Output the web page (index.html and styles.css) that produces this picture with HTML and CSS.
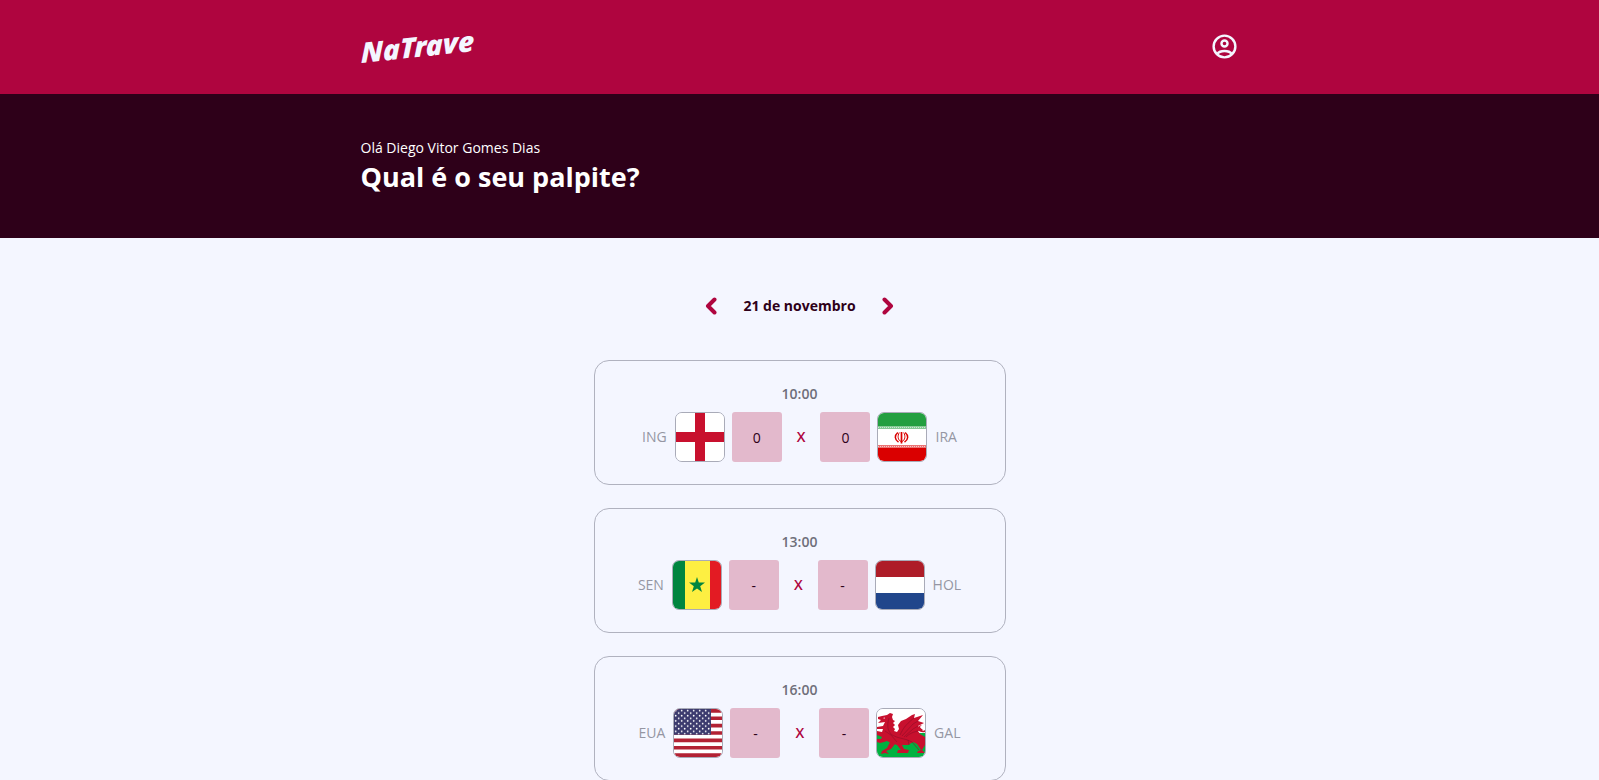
FILE: index.html
```html
<!DOCTYPE html>
<html lang="pt-BR">
<head>
<meta charset="utf-8">
<meta name="viewport" content="width=device-width, initial-scale=1">
<title>NaTrave</title>
<link rel="stylesheet" href="styles.css">
</head>
<body>
<header class="topbar">
  <div class="container topbar-row">
    <a class="logo" href="#" aria-label="NaTrave"><span class="logo-text">NaTrave</span></a>
    <a class="profile" href="#" aria-label="Perfil">
      <svg class="profile-icon" viewBox="0 0 24 24" fill="none" stroke="currentColor" stroke-width="2">
        <circle cx="12" cy="12" r="9"/>
        <circle cx="12" cy="9.500" r="2.500"/>
        <path d="M5.800 18.200C7.200 16.400 9.400 15.700 12 15.700s4.800.7 6.200 2.500"/>
      </svg>
    </a>
  </div>
</header>
<main>
  <section class="hero">
    <div class="container">
      <p class="greeting">Olá Diego Vitor Gomes Dias</p>
      <h1 class="title">Qual é o seu palpite?</h1>
    </div>
  </section>
  <section class="games">
    <div class="date-nav">
      <button class="arrow" type="button" aria-label="Dia anterior">
        <svg viewBox="0 0 12 18" class="arrow-icon"><path d="M9.500 2.500 3 9l6.500 6.500"/></svg>
      </button>
      <span class="date">21 de novembro</span>
      <button class="arrow" type="button" aria-label="Próximo dia">
        <svg viewBox="0 0 12 18" class="arrow-icon"><path d="M2.500 2.500 9 9l-6.500 6.500"/></svg>
      </button>
    </div>

    <form class="card">
      <span class="time">10:00</span>
      <div class="match">
        <label class="team" for="g1h">ING</label>
        <svg class="flag" viewBox="0 0 48 48">
          <path fill="#fff" d="M0 0h48v48H0z"/>
          <path fill="#c8102e" d="M19 0h10v48H19zM0 19h48v10H0z"/>
        </svg>
        <input class="score" id="g1h" type="text" inputmode="numeric" value="0">
        <span class="versus">X</span>
        <input class="score" id="g1a" type="text" inputmode="numeric" value="0">
        <svg class="flag" viewBox="0 0 48 48">
          <path fill="#fff" d="M0 0h48v48H0z"/>
          <path fill="#239f40" d="M0 0h48v13H0z"/>
          <path fill="#da0000" d="M0 35h48v13H0z"/>
          <path fill="none" stroke="#239f40" stroke-opacity=".55" stroke-width="3" d="M0 14.500h48"/>
          <path fill="none" stroke="#fff" stroke-opacity=".6" stroke-dasharray="1 1" d="M0 14.500h48"/>
          <path fill="none" stroke="#da0000" stroke-opacity=".55" stroke-width="3" d="M0 33.500h48"/>
          <path fill="none" stroke="#fff" stroke-opacity=".6" stroke-dasharray="1 1" d="M0 33.500h48"/>
          <g fill="none" stroke="#da0000">
            <path stroke-width="1.700" d="M23.500 19v11.500"/>
            <path stroke-width="1.500" d="M19.800 19.500c-3.500 3-3.300 7 .7 9.500M27.200 19.500c3.500 3 3.300 7-.7 9.500"/>
            <path d="M21.300 19.500c-2 3.500-1.500 7.500 1.700 9M25.700 19.500c2 3.500 1.500 7.500-1.700 9"/>
          </g>
        </svg>
        <label class="team" for="g1a">IRA</label>
      </div>
    </form>

    <form class="card">
      <span class="time">13:00</span>
      <div class="match">
        <label class="team" for="g2h">SEN</label>
        <svg class="flag" viewBox="0 0 48 48">
          <path fill="#00853f" d="M0 0h12v48H0z"/>
          <path fill="#fdef42" d="M12 0h25v48H12z"/>
          <path fill="#e31b23" d="M37 0h11v48H37z"/>
          <path fill="#00853f" d="m24 16 1.800 5.600H32l-4.800 3.600 1.800 5.800-5-3.600-5 3.600 1.800-5.800-4.800-3.600h6.200z"/>
        </svg>
        <input class="score" id="g2h" type="text" inputmode="numeric" placeholder="-">
        <span class="versus">X</span>
        <input class="score" id="g2a" type="text" inputmode="numeric" placeholder="-">
        <svg class="flag" viewBox="0 0 48 48">
          <path fill="#ae1c28" d="M0 0h48v16H0z"/>
          <path fill="#fff" d="M0 16h48v16H0z"/>
          <path fill="#21468b" d="M0 32h48v16H0z"/>
        </svg>
        <label class="team" for="g2a">HOL</label>
      </div>
    </form>

    <form class="card">
      <span class="time">16:00</span>
      <div class="match">
        <label class="team" for="g3h">EUA</label>
        <svg class="flag" viewBox="0 0 48 48">
          <defs>
            <pattern id="stars" width="6" height="5.200" patternUnits="userSpaceOnUse">
              <circle cx="1.700" cy="1.500" r=".9" fill="#fff"/>
              <circle cx="4.700" cy="4.100" r=".9" fill="#fff"/>
            </pattern>
          </defs>
          <path fill="#fff" d="M0 0h48v48H0z"/>
          <path stroke="#b22234" stroke-width="3.700" d="M0 1.850h48M0 9.240h48M0 16.620h48M0 24h48M0 31.400h48M0 38.770h48M0 46.150h48"/>
          <path fill="#3c3b6e" d="M0 0h37v25.850H0z"/>
          <path fill="url(#stars)" d="M0 0h37v25.500H0z"/>
        </svg>
        <input class="score" id="g3h" type="text" inputmode="numeric" placeholder="-">
        <span class="versus">X</span>
        <input class="score" id="g3a" type="text" inputmode="numeric" placeholder="-">
        <svg class="flag" viewBox="0 0 48 48">
          <path fill="#fff" d="M0 0h48v24H0z"/>
          <path fill="#00b140" d="M0 24h48v24H0z"/>
          <g fill="#c8102e">
            <path d="M1 8 5 7 10 6 13 4 16 5 15 8 16 11 18 12 16 14 18 16 16 18 18 20 17 22 20 23 22 20 21 16 24 12 29 10 35 6 38 5 37 9 46 6 41 12 47 14 41 17 46 21 41 22 43 25 48 28 48 36 45 41 48 44 40 44 41 42 44 41 40 35 36 33 31 36 25 36 27 40 32 41 31 44 20 44 21 41 24 41 20 36 14 34 10 32 7 33 3 34 0 33 0 30 4 30 5 28 0 26 0 22 5 23 6 20 0 20 0 18 6 17 8 13 1 14 4 11 1 10z"/>
            <path d="M13 33 18 35 14 40 9 42 12 45 8 44 4 45 5 42 10 39z"/>
            <path d="M48 16c-4-1-6 2-4 4 1 2 3 2 4 1v2c-5 1-8-2-7-4 1-3 4-4 7-3z"/>
          </g>
          <g fill="none" stroke="#8e0d28" stroke-width=".6">
            <path d="M23 26c4-9 8-12 14-17M25 27l11-12 5-3M27 28l9-8 5-3M29 28c4-4 8-5 12-6M12 9c-2 7-2 12 3 17 7 4 13 3 20 7l7 8M8 22l6 4 6 7M31 31l1 5"/>
          </g>
          <path fill="#fff" d="M6 9l2-.5-.5 1.300z"/>
        </svg>
        <label class="team" for="g3a">GAL</label>
      </div>
    </form>
  </section>
</main>
</body>
</html>
```
FILE: styles.css
```css
* {
  box-sizing: border-box;
}

body {
  margin: 0;
  background: #f4f6ff;
  color: #2e0019;
  font-family: "Open Sans", "Noto Sans", sans-serif;
  font-size: 14px;
  line-height: 22px;
}

.container {
  max-width: 878px;
  margin: 0 auto;
}

.topbar {
  background: #af053f;
  padding: 31px 16px 33px;
}

.topbar-row {
  display: flex;
  align-items: center;
  justify-content: space-between;
  height: 30px;
}

.logo {
  color: #f4f6ff;
  text-decoration: none;
}

.logo-text {
  display: block;
  font-family: "Noto Sans", sans-serif;
  font-size: 28px;
  font-style: italic;
  font-weight: 900;
  line-height: 30px;
  transform: skewY(-6deg);
}

.profile {
  display: flex;
  color: #f4f6ff;
}

.profile-icon {
  width: 29px;
  height: 29px;
}

.hero {
  background: #2e0019;
  color: #fff;
  padding: 43px 16px;
}

.greeting {
  margin: 0;
}

.title {
  margin: 0;
  font-size: 27px;
  font-weight: 700;
  line-height: 36px;
}

.games {
  display: flex;
  flex-direction: column;
  align-items: center;
  gap: 23px;
  padding: 57px 16px 22px;
}

.date-nav {
  display: flex;
  align-items: center;
  gap: 26px;
  margin-bottom: 20px;
}

.date {
  font-weight: 700;
}

.arrow {
  display: flex;
  padding: 0;
  border: 0;
  background: none;
  cursor: pointer;
}

.arrow-icon {
  width: 12px;
  height: 18px;
  fill: none;
  stroke: #af053f;
  stroke-width: 4;
  stroke-linecap: round;
  stroke-linejoin: round;
}

.card {
  display: flex;
  flex-direction: column;
  align-items: center;
  gap: 7px;
  width: 100%;
  max-width: 412px;
  padding: 22px;
  border: 1px solid #b0b2bf;
  border-radius: 15px;
}

.time {
  color: #6f6f7a;
  font-weight: 600;
}

.match {
  display: flex;
  align-items: center;
  gap: 7px;
}

.team {
  padding: 0 1px;
  color: #9596a3;
}

.flag {
  width: 50px;
  height: 50px;
  border: 1px solid #a9abb8;
  border-radius: 7px;
}

.score {
  width: 50px;
  height: 50px;
  padding: 0;
  border: 0;
  border-radius: 3px;
  background: #e3b9cc;
  color: #2e0019;
  font: inherit;
  text-align: center;
}

.score::placeholder {
  color: #2e0019;
  opacity: 1;
}

.versus {
  padding: 0 8px;
  color: #af053f;
  font-weight: 600;
}
```
